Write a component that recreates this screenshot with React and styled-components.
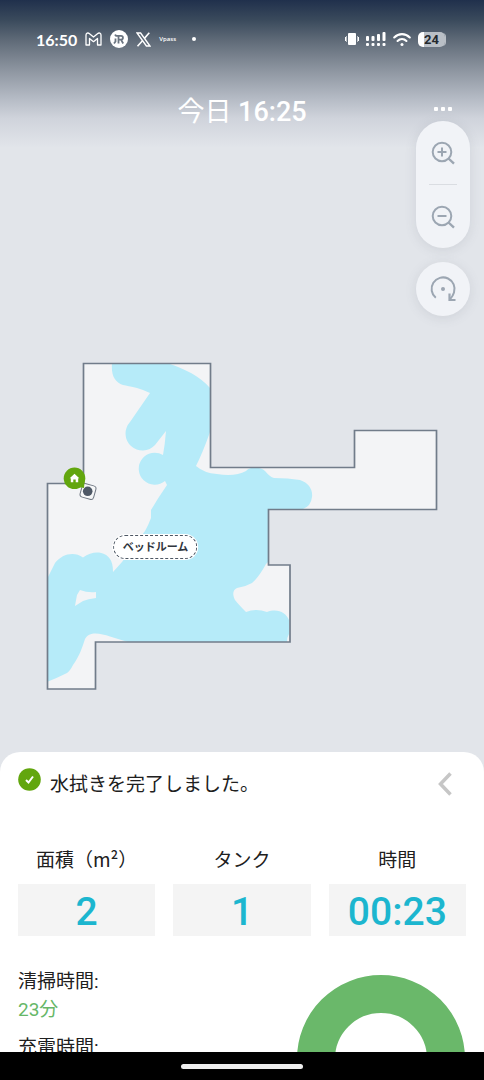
import styled, { createGlobalStyle } from "styled-components";

const GlobalStyle = createGlobalStyle`
  * {
    box-sizing: border-box;
  }
  body {
    margin: 0;
    background: #e2e5ea;
    font-family: Roboto, "Noto Sans CJK JP", sans-serif;
    color: #202020;
  }
  button {
    border: 0;
    padding: 0;
    background: none;
    font: inherit;
    color: inherit;
    cursor: pointer;
  }
  svg {
    display: block;
  }
`;

const Screen = styled.div`
  display: flex;
  flex-direction: column;
  height: 100vh;
  overflow: hidden;
`;

const Stage = styled.main`
  display: flex;
  flex-direction: column;
  flex-shrink: 0;
  padding-bottom: 54px;
  background: linear-gradient(
      #20304c 0px,
      #3a4a5c 20px,
      #626d7a 42px,
      #8d95a0 70px,
      #b4bac4 98px,
      #cfd3db 118px,
      #e2e5ea 148px
    )
    #e2e5ea;
`;

const StatusBar = styled.div`
  display: flex;
  justify-content: space-between;
  align-items: center;
  height: 22px;
  margin-top: 28px;
  padding: 0 36px;
  color: #fff;
`;

const StatusGroup = styled.div`
  display: flex;
  align-items: center;
  gap: ${(p) => p.$gap}px;
`;

const Clock = styled.span`
  font-family: Lato, sans-serif;
  font-size: 16px;
  font-weight: 700;
`;

const Vpass = styled.span`
  margin-right: 8px;
  font-family: "Open Sans", sans-serif;
  font-size: 6px;
  font-weight: 600;
`;

const Battery = styled.span`
  width: 27px;
  height: 15px;
  margin-right: 3px;
  border-radius: 5px;
  background: linear-gradient(90deg, #fff 24%, #b9bfc6 24%);
  box-shadow: 2px 0 0 -1px #b9bfc6;
  color: #23282e;
  font-size: 13px;
  font-weight: 700;
  line-height: 15px;
  text-align: center;
`;

const TitleBar = styled.header`
  display: grid;
  grid-template-columns: 1fr auto 1fr;
  height: 19px;
  margin-top: 52px;
  padding: 0 14px;
  color: #fff;
`;

const Title = styled.h1`
  grid-column: 2;
  margin: 0;
  font-size: 27px;
  font-weight: 400;
  line-height: 20px;
`;

const TitleTime = styled.time`
  font-weight: 500;
`;

const MoreButton = styled.button`
  display: flex;
  justify-content: center;
  justify-self: end;
  gap: 3px;
  width: 54px;
  padding-top: 5px;
`;

const Dot = styled.span`
  width: 4px;
  height: 4px;
  border-radius: 50%;
  background: #fff;
`;

const MoreDot = styled(Dot)`
  border-radius: 1px;
`;

const Controls = styled.div`
  display: flex;
  flex-direction: column;
  align-self: flex-end;
  gap: 14px;
  width: 54px;
  margin-right: 14px;
`;

const ControlGroup = styled.div`
  display: flex;
  flex-direction: column;
  align-items: center;
  border-radius: 27px;
  background: #f1f3f7;
  color: #9ca6b2;
  box-shadow: 0 2px 12px rgba(90, 100, 115, 0.14);
`;

const ControlButton = styled.button`
  display: grid;
  place-items: center;
  width: 54px;
  height: ${(p) => p.$height}px;
`;

const Divider = styled.span`
  width: 28px;
  height: 1px;
  background: #dadde2;
`;

const MapWrap = styled.div`
  position: relative;
  margin: 39px 36px 0;
`;

const MapSvg = styled.svg`
  width: 100%;
  height: auto;
`;

const RoomLabel = styled.button`
  position: absolute;
  left: 29%;
  top: 56%;
  transform: translate(-50%, -50%);
  height: 24px;
  padding: 1px 8px 0;
  border: 1px dashed #4d5764;
  border-radius: 12px;
  background: #fff;
  color: #30363e;
  font-size: 11px;
  font-weight: 700;
  line-height: 22px;
  white-space: nowrap;
  box-shadow: 0 0 0 1px #fff;
`;

const Sheet = styled.section`
  flex: 1;
  min-height: 0;
  overflow-y: auto;
  scrollbar-width: none;
  padding: 16px 18px 0;
  border-radius: 20px 20px 0 0;
  background: #fff;
`;

const SheetHeader = styled.div`
  display: flex;
  align-items: flex-start;
  gap: 9px;
`;

const SheetTitle = styled.h2`
  flex: 1;
  margin: 0;
  font-size: 19px;
  font-weight: 400;
  line-height: 34px;
`;

const CollapseButton = styled.button`
  display: grid;
  place-items: center;
  width: 42px;
  height: 32px;
  color: #c6c6c6;
`;

const Stats = styled.dl`
  display: grid;
  grid-template-columns: repeat(3, 1fr);
  gap: 18px;
  margin: 42px 0 0;
  text-align: center;
`;

const StatLabel = styled.dt`
  margin-bottom: 10px;
  font-family: "Noto Sans CJK JP", sans-serif;
  font-size: 19px;
  line-height: 30px;
`;

const StatValue = styled.dd`
  margin: 0;
  padding-top: 4px;
  background: #f4f4f4;
  color: #1cb6cf;
  font-size: 39px;
  font-weight: 500;
  line-height: 48px;
`;

const Details = styled.div`
  display: flex;
  justify-content: space-between;
  align-items: flex-start;
  margin-top: 32px;
`;

const Times = styled.dl`
  margin: 0;
  font-size: 19px;
  line-height: 28px;
`;

const TimeValue = styled.dd`
  margin: 0 0 10px;
  color: #66b768;
`;

const Donut = styled.svg`
  width: 170px;
  height: 170px;
  margin-top: 6px;
`;

const NavBar = styled.footer`
  display: flex;
  flex-shrink: 0;
  justify-content: center;
  align-items: center;
  height: 28px;
  background: #000;
`;

const NavHandle = styled.span`
  width: 122px;
  height: 5px;
  border-radius: 3px;
  background: #eee;
`;

const stats = [
  { label: "面積（m²）", value: "2" },
  { label: "タンク", value: "1" },
  { label: "時間", value: "00:23" },
];

const times = [{ label: "清掃時間:", value: "23分" }, { label: "充電時間:" }];

const ROOM =
  "M83.5 363.5H210.5V467.5H354.5V430.5H436.5V509.5H268.5V565H290V642H95.5V689H47.5V483.5H83.5Z";

const CLEANED =
  "M112 363H167C185 369 200 376 210 388V432Q203 452 196 466Q204 473 217 474Q235 477 246 471C251 466 261 467 265 471Q270 477 274 478Q288 478 300 480C309 483 313 490 312 497Q311 506 303 509H268V562L266 564Q259 577 252 583Q245 587 237 588C233 590 232 594 235 600Q239 605 246 612Q256 608 267 612C278 608 286 613 289 620V634Q287 637 287 642H128Q118 639 110 636.500C100 633 89 631 85 639C82 648 80 655 73 665Q70 671 67 673Q57 678 48 681.500V577Q51 571 55 563C62 554 74 551 83 557.500C93 550 105 551 110 559Q113 563 113 572L122 562L145 531Q148 526 151 518V510Q158 498 167 485L165 481A16 16 0 1 1 163 455Q165 444 166 431L155 445A16 16 0 0 1 130 422L150 393Q144 390 137 388Q128 386 123 385C115 382 111 376 112 363Z";

const HOLE = "M80 590Q88 593 96 592V598Q88 599 83 601L75 606Q76 600 77 595Z";

const GmailIcon = () => (
  <svg width="17" height="14" viewBox="0 0 17 14" fill="none" stroke="#fff" strokeWidth="1.300" strokeLinejoin="round">
    <path d="M1 3C1 1 3 .5 4.200 1.500L8.500 5L12.800 1.500C14 .5 16 1 16 3V13H12.500V6.500L8.500 9.700L4.500 6.500V13H1Z" />
  </svg>
);

const RobotAppIcon = () => (
  <svg width="18" height="18" viewBox="0 0 18 18">
    <circle cx="9" cy="9" r="9" fill="#fff" />
    <g fill="none" stroke="#6b7581" strokeWidth="1.800">
      <path d="M5.500 5.800H11C13.600 5.800 13.600 9.600 11 9.600H8.500M8.500 5.800V13.500M11 9.600L13.200 13.500" />
      <path d="M5.500 8.500V11.500L4 13.500" />
    </g>
    <circle cx="5.500" cy="5.300" r="1" fill="#6b7581" />
  </svg>
);

const XIcon = () => (
  <svg width="15" height="15" viewBox="0 0 15 15" fill="none" stroke="#fff">
    <path d="M1 1H4.600L14 14H10.400Z" strokeWidth="1.400" />
    <path d="M13.300 .8L8.400 6.400M6.500 8.700L1.500 14.200" strokeWidth="1.600" />
  </svg>
);

const VibrateIcon = () => (
  <svg width="14" height="12" viewBox="0 0 14 12" fill="#fff">
    <rect x="3" y="0" width="8" height="12" rx="1" />
    <rect x="0" y="4" width="1" height="4" />
    <rect x="13" y="4" width="1" height="4" />
    <path d="M1 3H2V9H1ZM12 3H13V9H12Z" opacity=".6" />
  </svg>
);

const SignalIcon = () => (
  <svg width="20" height="14" viewBox="0 0 20 14" fill="#fff">
    {[4, 4, 2, 0].map((top, i) => (
      <g key={i}>
        <rect x={i * 5.5} y={top} width="3" height={9 - top} rx="1" />
        <rect x={i * 5.5} y="11" width="3" height="3" rx="1" />
      </g>
    ))}
  </svg>
);

const WifiIcon = () => (
  <svg width="18" height="15" viewBox="0 0 19 15" fill="none" stroke="#fff" strokeWidth="2.200" strokeLinecap="round">
    <path d="M1.300 5.300C6 .7 13 .7 17.700 5.300" />
    <path d="M4.800 9C7.500 6.400 11.500 6.400 14.200 9" />
    <circle cx="9.500" cy="12.700" r="1.600" fill="#fff" stroke="none" />
  </svg>
);

const ZoomIcon = ({ plus }) => (
  <svg width="28" height="28" viewBox="0 0 28 28" fill="none" stroke="currentColor" strokeWidth="2">
    <circle cx="13" cy="13" r="9.300" />
    <path d="M19.500 19.500L25 24.700" strokeWidth="2.400" />
    <path d={plus ? "M8.500 13H17.500M13 8.500V17.500" : "M8.500 13H17.500"} />
  </svg>
);

const RotateIcon = () => (
  <svg width="28" height="28" viewBox="0 0 28 28" fill="none" stroke="currentColor" strokeWidth="2">
    <path d="M6.800 22.800A11.500 11.500 0 1 1 25 17.500Q24 21 20.800 24.500" />
    <path d="M20.500 18.500V25H26.500" strokeWidth="2.200" />
    <circle cx="14" cy="14" r="2" fill="currentColor" stroke="none" />
  </svg>
);

const CheckIcon = () => (
  <svg width="23" height="23" viewBox="0 0 23 23">
    <circle cx="11.500" cy="11.500" r="11.300" fill="#62a60e" />
    <path d="M8 12L10.500 14.500L15 8.500" fill="none" stroke="#fff" strokeWidth="2" />
  </svg>
);

const FloorMap = () => (
  <MapWrap>
    <MapSvg viewBox="36 355 412 343">
      <path d={ROOM} fill="#f3f4f6" />
      <path d={CLEANED} fill="#b6ebf9" />
      <path d={HOLE} fill="#f3f4f6" />
      <path d={ROOM} fill="none" stroke="#717c8a" strokeWidth="1.700" />
      <rect x="81" y="484.500" width="14" height="14" rx="3" fill="#f6f7f8" stroke="#6f7782" transform="rotate(16 88 491.500)" />
      <path d="M65 484L84 488L85 476Z" fill="#62a60e" />
      <circle cx="74.500" cy="478.300" r="10.800" fill="#62a60e" />
      <circle cx="87.700" cy="491.300" r="4.800" fill="#4d5765" />
      <path d="M74.500 473.800L79.300 478.200H78.200V482.300H75.700V479.600H73.300V482.300H70.800V478.200H69.700Z" fill="#fff" />
    </MapSvg>
    <RoomLabel>ベッドルーム</RoomLabel>
  </MapWrap>
);

const App = () => {
  return (
    <Screen>
      <GlobalStyle />
      <Stage>
        <StatusBar>
          <StatusGroup $gap={8}>
            <Clock>16:50</Clock>
            <GmailIcon />
            <RobotAppIcon />
            <XIcon />
            <Vpass>Vpass</Vpass>
            <Dot />
          </StatusGroup>
          <StatusGroup $gap={7}>
            <VibrateIcon />
            <SignalIcon />
            <WifiIcon />
            <Battery>24</Battery>
          </StatusGroup>
        </StatusBar>
        <TitleBar>
          <Title>
            今日 <TitleTime>16:25</TitleTime>
          </Title>
          <MoreButton aria-label="メニュー">
            <MoreDot />
            <MoreDot />
            <MoreDot />
          </MoreButton>
        </TitleBar>
        <Controls>
          <ControlGroup>
            <ControlButton $height={63} aria-label="拡大">
              <ZoomIcon plus />
            </ControlButton>
            <Divider />
            <ControlButton $height={63} aria-label="縮小">
              <ZoomIcon />
            </ControlButton>
          </ControlGroup>
          <ControlGroup>
            <ControlButton $height={54} aria-label="回転">
              <RotateIcon />
            </ControlButton>
          </ControlGroup>
        </Controls>
        <FloorMap />
      </Stage>
      <Sheet>
        <SheetHeader>
          <CheckIcon />
          <SheetTitle>水拭きを完了しました。</SheetTitle>
          <CollapseButton aria-label="閉じる">
            <svg width="14" height="24" viewBox="0 0 14 24" fill="none" stroke="currentColor" strokeWidth="3.500">
              <path d="M12.500 1.500L2.500 12L12.500 22.500" />
            </svg>
          </CollapseButton>
        </SheetHeader>
        <Stats>
          {stats.map((s) => (
            <div key={s.label}>
              <StatLabel>{s.label}</StatLabel>
              <StatValue>{s.value}</StatValue>
            </div>
          ))}
        </Stats>
        <Details>
          <Times>
            {times.map((t) => (
              <div key={t.label}>
                <dt>{t.label}</dt>
                {t.value && <TimeValue>{t.value}</TimeValue>}
              </div>
            ))}
          </Times>
          <Donut viewBox="0 0 170 170">
            <circle cx="85" cy="85" r="65" fill="none" stroke="#6ab86a" strokeWidth="38" />
          </Donut>
        </Details>
      </Sheet>
      <NavBar>
        <NavHandle />
      </NavBar>
    </Screen>
  );
};

export default App;
